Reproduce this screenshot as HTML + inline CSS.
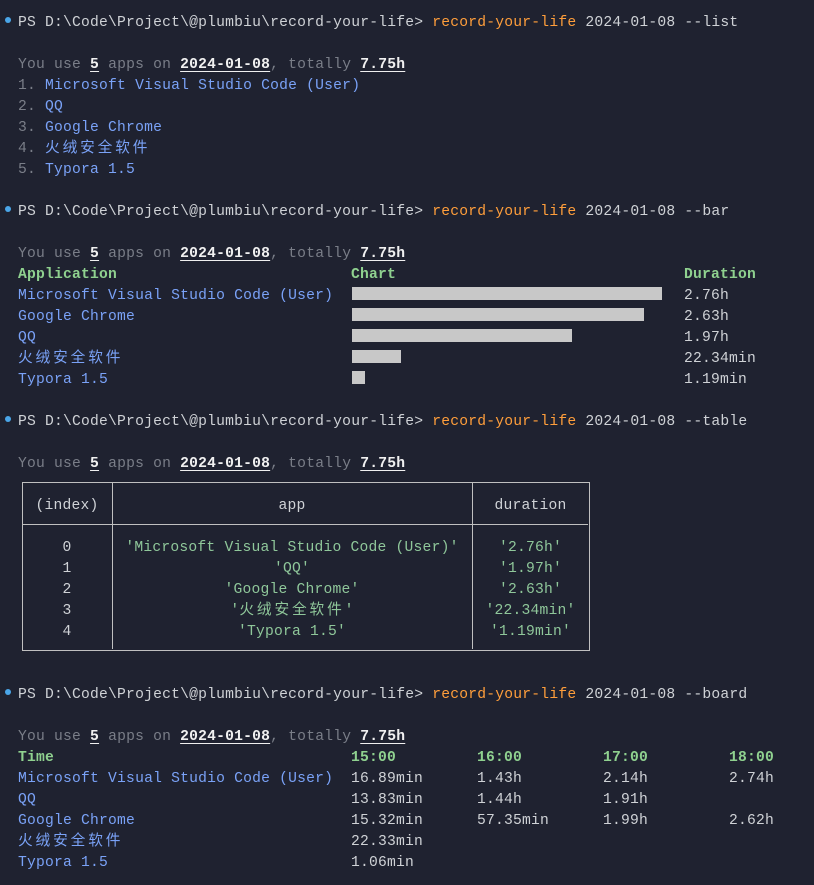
<!DOCTYPE html>
<html><head><meta charset="utf-8"><style>
html,body{margin:0;padding:0;background:#1f2230;width:814px;height:885px;overflow:hidden}
body{position:relative;font-family:"Liberation Mono","Noto Sans CJK SC",monospace;font-size:14.67px;letter-spacing:0.21px;color:#cfd2d6}
.l{position:absolute;left:18px;height:21px;line-height:21px;white-space:pre;margin-top:3px}
.a{position:absolute;height:21px;line-height:21px;white-space:pre;margin-top:3px}
.g{color:#7a7e88}.b{color:#7aa2f7}.o{color:#ff9e3b}.gr{color:#8fd18f;font-weight:bold}
.w{color:#f0f0f0;font-weight:bold;text-decoration:underline;text-underline-offset:3px}
.s{color:#8fc79a}
.c{font-family:"Noto Sans CJK SC",sans-serif;letter-spacing:2.9px;display:inline-block;height:21px;line-height:21px;vertical-align:top;position:relative;top:-3px}
.dot{position:absolute;left:5px;width:6px;height:6px;border-radius:3px;background:#4aa6e8}
.bar{position:absolute;left:352px;height:13px;background:#c8c8c8}
.tb{position:absolute;border:1px solid #c0c0c0}
</style></head><body>

<div class="dot" style="top:17px"></div>
<div class="l" style="top:10px">PS D:\Code\Project\@plumbiu\record-your-life&gt; <span class="o">record-your-life</span> 2024-01-08 --list</div>
<div class="l g" style="top:52px">You use <span class="w">5</span> apps on <span class="w">2024-01-08</span>, totally <span class="w">7.75h</span></div>
<div class="l g" style="top:73px">1. <span class="b">Microsoft Visual Studio Code (User)</span></div>
<div class="l g" style="top:94px">2. <span class="b">QQ</span></div>
<div class="l g" style="top:115px">3. <span class="b">Google Chrome</span></div>
<div class="l g" style="top:136px">4. <span class="b c">火绒安全软件</span></div>
<div class="l g" style="top:157px">5. <span class="b">Typora 1.5</span></div>

<div class="dot" style="top:206px"></div>
<div class="l" style="top:199px">PS D:\Code\Project\@plumbiu\record-your-life&gt; <span class="o">record-your-life</span> 2024-01-08 --bar</div>
<div class="l g" style="top:241px">You use <span class="w">5</span> apps on <span class="w">2024-01-08</span>, totally <span class="w">7.75h</span></div>
<div class="l gr" style="top:262px">Application</div><div class="a gr" style="top:262px;left:351px">Chart</div><div class="a gr" style="top:262px;left:684px">Duration</div>
<div class="l b" style="top:283px">Microsoft Visual Studio Code (User)</div><div class="bar" style="top:287px;width:310px"></div><div class="a" style="top:283px;left:684px">2.76h</div>
<div class="l b" style="top:304px">Google Chrome</div><div class="bar" style="top:308px;width:292px"></div><div class="a" style="top:304px;left:684px">2.63h</div>
<div class="l b" style="top:325px">QQ</div><div class="bar" style="top:329px;width:220px"></div><div class="a" style="top:325px;left:684px">1.97h</div>
<div class="l b" style="top:346px"><span class="c">火绒安全软件</span></div><div class="bar" style="top:350px;width:49px"></div><div class="a" style="top:346px;left:684px">22.34min</div>
<div class="l b" style="top:367px">Typora 1.5</div><div class="bar" style="top:371px;width:13px"></div><div class="a" style="top:367px;left:684px">1.19min</div>

<div class="dot" style="top:416px"></div>
<div class="l" style="top:409px">PS D:\Code\Project\@plumbiu\record-your-life&gt; <span class="o">record-your-life</span> 2024-01-08 --table</div>
<div class="l g" style="top:451px">You use <span class="w">5</span> apps on <span class="w">2024-01-08</span>, totally <span class="w">7.75h</span></div>
<div class="tb" style="left:22px;top:482px;width:566px;height:167px"></div>
<div class="tb" style="left:22px;top:524px;width:566px;height:0;border-width:1px 0 0 0"></div>
<div class="tb" style="left:112px;top:482px;width:0;height:167px;border-width:0 0 0 1px"></div>
<div class="tb" style="left:472px;top:482px;width:0;height:167px;border-width:0 0 0 1px"></div>
<div class="a" style="top:493px;left:22px;width:90px;text-align:center">(index)</div>
<div class="a" style="top:493px;left:112px;width:360px;text-align:center">app</div>
<div class="a" style="top:493px;left:472px;width:117px;text-align:center">duration</div>
<div class="a" style="top:535px;left:22px;width:90px;text-align:center">0</div><div class="a s" style="top:535px;left:112px;width:360px;text-align:center">'Microsoft Visual Studio Code (User)'</div><div class="a s" style="top:535px;left:472px;width:117px;text-align:center">'2.76h'</div>
<div class="a" style="top:556px;left:22px;width:90px;text-align:center">1</div><div class="a s" style="top:556px;left:112px;width:360px;text-align:center">'QQ'</div><div class="a s" style="top:556px;left:472px;width:117px;text-align:center">'1.97h'</div>
<div class="a" style="top:577px;left:22px;width:90px;text-align:center">2</div><div class="a s" style="top:577px;left:112px;width:360px;text-align:center">'Google Chrome'</div><div class="a s" style="top:577px;left:472px;width:117px;text-align:center">'2.63h'</div>
<div class="a" style="top:598px;left:22px;width:90px;text-align:center">3</div><div class="a s" style="top:598px;left:112px;width:360px;text-align:center">'<span class="c">火绒安全软件</span>'</div><div class="a s" style="top:598px;left:472px;width:117px;text-align:center">'22.34min'</div>
<div class="a" style="top:619px;left:22px;width:90px;text-align:center">4</div><div class="a s" style="top:619px;left:112px;width:360px;text-align:center">'Typora 1.5'</div><div class="a s" style="top:619px;left:472px;width:117px;text-align:center">'1.19min'</div>

<div class="dot" style="top:689px"></div>
<div class="l" style="top:682px">PS D:\Code\Project\@plumbiu\record-your-life&gt; <span class="o">record-your-life</span> 2024-01-08 --board</div>
<div class="l g" style="top:724px">You use <span class="w">5</span> apps on <span class="w">2024-01-08</span>, totally <span class="w">7.75h</span></div>
<div class="l gr" style="top:745px">Time</div><div class="a gr" style="top:745px;left:351px">15:00</div><div class="a gr" style="top:745px;left:477px">16:00</div><div class="a gr" style="top:745px;left:603px">17:00</div><div class="a gr" style="top:745px;left:729px">18:00</div>
<div class="l b" style="top:766px">Microsoft Visual Studio Code (User)</div><div class="a" style="top:766px;left:351px">16.89min</div><div class="a" style="top:766px;left:477px">1.43h</div><div class="a" style="top:766px;left:603px">2.14h</div><div class="a" style="top:766px;left:729px">2.74h</div>
<div class="l b" style="top:787px">QQ</div><div class="a" style="top:787px;left:351px">13.83min</div><div class="a" style="top:787px;left:477px">1.44h</div><div class="a" style="top:787px;left:603px">1.91h</div>
<div class="l b" style="top:808px">Google Chrome</div><div class="a" style="top:808px;left:351px">15.32min</div><div class="a" style="top:808px;left:477px">57.35min</div><div class="a" style="top:808px;left:603px">1.99h</div><div class="a" style="top:808px;left:729px">2.62h</div>
<div class="l b" style="top:829px"><span class="c">火绒安全软件</span></div><div class="a" style="top:829px;left:351px">22.33min</div>
<div class="l b" style="top:850px">Typora 1.5</div><div class="a" style="top:850px;left:351px">1.06min</div>
</body></html>
